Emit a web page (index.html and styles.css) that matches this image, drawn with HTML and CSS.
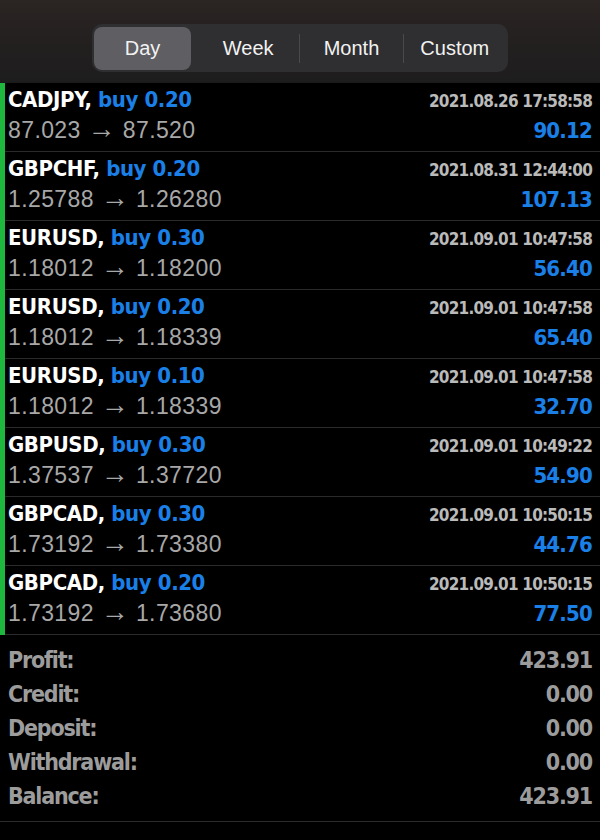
FILE: index.html
```html
<!DOCTYPE html>
<html lang="en">
<head>
  <meta charset="UTF-8" />
  <meta name="viewport" content="width=device-width, initial-scale=1.0"/>
  <title>History</title>
  <link rel="stylesheet" href="styles.css">
</head>

<body>
  <div class="header">
    <div class="segmented">
      <div class="segment active">Day</div>
      <div class="segment">Week</div>
      <div class="divider"></div>
      <div class="segment">Month</div>
      <div class="divider"></div>
      <div class="segment">Custom</div>
    </div>
  </div>

  <div class="deals">
    <div class="deal">
      <div class="line">
        <span class="symbol">CADJPY, <span class="side">buy 0.20</span></span>
        <span class="time">2021.08.26 17:58:58</span>
      </div>
      <div class="line">
        <span class="prices">87.023 <span class="arrow">→</span> 87.520</span>
        <span class="profit">90.12</span>
      </div>
    </div>
    <div class="deal">
      <div class="line">
        <span class="symbol">GBPCHF, <span class="side">buy 0.20</span></span>
        <span class="time">2021.08.31 12:44:00</span>
      </div>
      <div class="line">
        <span class="prices">1.25788 <span class="arrow">→</span> 1.26280</span>
        <span class="profit">107.13</span>
      </div>
    </div>
    <div class="deal">
      <div class="line">
        <span class="symbol">EURUSD, <span class="side">buy 0.30</span></span>
        <span class="time">2021.09.01 10:47:58</span>
      </div>
      <div class="line">
        <span class="prices">1.18012 <span class="arrow">→</span> 1.18200</span>
        <span class="profit">56.40</span>
      </div>
    </div>
    <div class="deal">
      <div class="line">
        <span class="symbol">EURUSD, <span class="side">buy 0.20</span></span>
        <span class="time">2021.09.01 10:47:58</span>
      </div>
      <div class="line">
        <span class="prices">1.18012 <span class="arrow">→</span> 1.18339</span>
        <span class="profit">65.40</span>
      </div>
    </div>
    <div class="deal">
      <div class="line">
        <span class="symbol">EURUSD, <span class="side">buy 0.10</span></span>
        <span class="time">2021.09.01 10:47:58</span>
      </div>
      <div class="line">
        <span class="prices">1.18012 <span class="arrow">→</span> 1.18339</span>
        <span class="profit">32.70</span>
      </div>
    </div>
    <div class="deal">
      <div class="line">
        <span class="symbol">GBPUSD, <span class="side">buy 0.30</span></span>
        <span class="time">2021.09.01 10:49:22</span>
      </div>
      <div class="line">
        <span class="prices">1.37537 <span class="arrow">→</span> 1.37720</span>
        <span class="profit">54.90</span>
      </div>
    </div>
    <div class="deal">
      <div class="line">
        <span class="symbol">GBPCAD, <span class="side">buy 0.30</span></span>
        <span class="time">2021.09.01 10:50:15</span>
      </div>
      <div class="line">
        <span class="prices">1.73192 <span class="arrow">→</span> 1.73380</span>
        <span class="profit">44.76</span>
      </div>
    </div>
    <div class="deal">
      <div class="line">
        <span class="symbol">GBPCAD, <span class="side">buy 0.20</span></span>
        <span class="time">2021.09.01 10:50:15</span>
      </div>
      <div class="line">
        <span class="prices">1.73192 <span class="arrow">→</span> 1.73680</span>
        <span class="profit">77.50</span>
      </div>
    </div>
  </div>

  <div class="summary">
    <div class="sum-row"><span>Profit:</span><span>423.91</span></div>
    <div class="sum-row"><span>Credit:</span><span>0.00</span></div>
    <div class="sum-row"><span>Deposit:</span><span>0.00</span></div>
    <div class="sum-row"><span>Withdrawal:</span><span>0.00</span></div>
    <div class="sum-row"><span>Balance:</span><span>423.91</span></div>
  </div>
</body>
</html>
```

FILE: styles.css
```css
body {
  margin: 0;
  padding: 0;
  background-color: #000000;
  font-family: "DejaVu Sans Condensed", "Liberation Sans", sans-serif;
  color: #ffffff;
  width: 600px;
  height: 840px;
  overflow: hidden;
}

.header {
  height: 82px;
  background: linear-gradient(180deg, #2b2523 0%, #221f1f 60%, #1e1d1e 100%);
  display: flex;
  justify-content: center;
  align-items: flex-start;
  padding-top: 24px;
  box-sizing: border-box;
}

.segmented {
  display: flex;
  align-items: center;
  width: 416px;
  height: 48px;
  padding: 2px;
  box-sizing: border-box;
  background-color: #2f2e30;
  border-radius: 10px;
  font-family: "Liberation Sans", Arial, sans-serif;
  font-size: 20px;
}

.segment {
  flex: 1;
  height: 43px;
  display: flex;
  align-items: center;
  justify-content: center;
  color: #f2f2f2;
  border-radius: 8px;
}

.segment.active {
  flex: 0 0 97px;
  background-color: #5e5e63;
  margin-right: 6px;
}

.divider {
  width: 1px;
  height: 29px;
  background-color: #4a494c;
}

.deals {
  border-top: 1px solid #1a1a1a;
}

.deal {
  height: 69px;
  border-left: 5px solid #1fb83f;
  box-sizing: border-box;
  padding: 4px 8px 0 3px;
  position: relative;
}

.deal::after {
  content: "";
  position: absolute;
  left: 0;
  right: 0;
  bottom: 0;
  height: 1px;
  background-color: #2b2b2b;
}

.line {
  display: flex;
  justify-content: space-between;
  align-items: baseline;
}

.line:first-child {
  height: 30px;
}

.symbol {
  font-weight: bold;
  font-size: 22px;
  letter-spacing: -0.4px;
  color: #ffffff;
}

.side {
  color: #1a80e8;
}

.time {
  font-weight: bold;
  font-size: 17px;
  letter-spacing: -0.8px;
  color: #bababa;
}

.prices {
  font-family: "Liberation Sans", Arial, sans-serif;
  font-size: 23px;
  letter-spacing: 0.4px;
  color: #a8a8a8;
}

.arrow {
  font-size: 28px;
  line-height: 0;
}

.profit {
  font-weight: bold;
  font-size: 22px;
  letter-spacing: -0.8px;
  color: #1a80e8;
}

.summary {
  padding: 8px;
  border-bottom: 1px solid #2b2b2b;
  color: #9c9c9c;
  font-weight: bold;
  font-size: 23px;
  letter-spacing: -1.2px;
}

.sum-row {
  height: 34px;
  display: flex;
  justify-content: space-between;
  align-items: center;
}
```
